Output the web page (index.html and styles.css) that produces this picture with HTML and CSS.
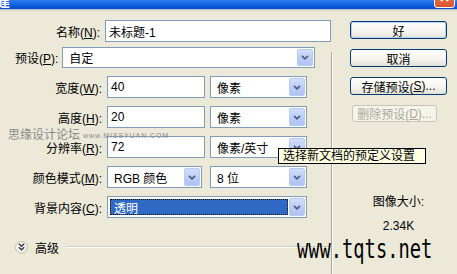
FILE: index.html
```html
<!DOCTYPE html>
<html lang="zh-CN">
<head>
<meta charset="utf-8">
<title>新建</title>
<link rel="stylesheet" href="styles.css">
</head>
<body>
<div class="window">
  <div class="titlebar">
    <span class="title">建</span>
    <span class="close"><svg width="11" height="11" viewBox="0 0 11 11"><path d="M2 2 L9 9 M9 2 L2 9" stroke="#fff" stroke-width="2"/></svg></span>
  </div>
  <div class="titleedge"></div>
  <div class="body">
    <div class="form">
      <div class="row">
        <span class="label">名称(<u>N</u>):</span>
        <div class="field field-name">未标题-1</div>
      </div>
      <div class="rows">
        <div class="row row-preset">
          <span class="label-preset">预设(<u>P</u>):</span>
          <div class="select select-preset"><span class="sel-text">自定</span><span class="drop"><svg width="8" height="5" viewBox="0 0 8 5"><path d="M1 0.8 L4 3.8 L7 0.8" stroke="#4A5E86" stroke-width="1.7" fill="none"/></svg></span></div>
        </div>
        <div class="row">
          <span class="label">宽度(<u>W</u>):</span>
          <div class="field field-num">40</div>
          <div class="select select-unit"><span class="sel-text">像素</span><span class="drop"><svg width="8" height="5" viewBox="0 0 8 5"><path d="M1 0.8 L4 3.8 L7 0.8" stroke="#4A5E86" stroke-width="1.7" fill="none"/></svg></span></div>
        </div>
        <div class="row">
          <span class="label">高度(<u>H</u>):</span>
          <div class="field field-num">20</div>
          <div class="select select-unit"><span class="sel-text">像素</span><span class="drop"><svg width="8" height="5" viewBox="0 0 8 5"><path d="M1 0.8 L4 3.8 L7 0.8" stroke="#4A5E86" stroke-width="1.7" fill="none"/></svg></span></div>
        </div>
        <div class="row">
          <span class="label">分辨率(<u>R</u>):</span>
          <div class="field field-num">72</div>
          <div class="select select-unit"><span class="sel-text">像素/英寸</span><span class="drop"><svg width="8" height="5" viewBox="0 0 8 5"><path d="M1 0.8 L4 3.8 L7 0.8" stroke="#4A5E86" stroke-width="1.7" fill="none"/></svg></span></div>
        </div>
        <div class="row">
          <span class="label">颜色模式(<u>M</u>):</span>
          <div class="select select-mode"><span class="sel-text">RGB 颜色</span><span class="drop"><svg width="8" height="5" viewBox="0 0 8 5"><path d="M1 0.8 L4 3.8 L7 0.8" stroke="#4A5E86" stroke-width="1.7" fill="none"/></svg></span></div>
          <div class="select select-unit"><span class="sel-text">8 位</span><span class="drop"><svg width="8" height="5" viewBox="0 0 8 5"><path d="M1 0.8 L4 3.8 L7 0.8" stroke="#4A5E86" stroke-width="1.7" fill="none"/></svg></span></div>
        </div>
        <div class="row">
          <span class="label">背景内容(<u>C</u>):</span>
          <div class="select select-bg"><span class="sel-text sel-active">透明</span><span class="drop"><svg width="8" height="5" viewBox="0 0 8 5"><path d="M1 0.8 L4 3.8 L7 0.8" stroke="#4A5E86" stroke-width="1.7" fill="none"/></svg></span></div>
        </div>
      </div>
      <div class="advanced">
        <span class="adv-btn"><svg width="7" height="8" viewBox="0 0 7 8"><path d="M0.8 0.8 L3.5 3.3 L6.2 0.8 M0.8 4.3 L3.5 6.8 L6.2 4.3" stroke="#2C3A4E" stroke-width="1.4" fill="none"/></svg></span>
        <span class="adv-text">高级</span>
        <span class="adv-line"></span>
      </div>
    </div>
    <div class="side">
      <div class="sep"></div>
      <div class="actions">
        <div class="btn btn-default">好</div>
        <div class="btn">取消</div>
        <div class="btn">存储预设(<u>S</u>)...</div>
        <div class="btn btn-disabled">删除预设(<u>D</u>)...</div>
        <div class="info">
          <div class="info-label">图像大小:</div>
          <div class="info-value">2.34K</div>
        </div>
      </div>
    </div>
  </div>
  <div class="tooltip">选择新文档的预定义设置</div>
  <div class="wm-cn">思缘设计论坛<span class="wm-small">www.MISSYUAN.COM</span></div>
  <div class="wm-url">www.tqts.net</div>
</div>
</body>
</html>
```

FILE: styles.css
```css
* { box-sizing: border-box; }

html, body {
  margin: 0;
  padding: 0;
  background: #ECE9D8;
}

.window {
  position: relative;
  width: 457px;
  height: 274px;
  overflow: hidden;
  background: #ECE9D8;
  font-family: "Liberation Sans", "Noto Sans CJK SC", sans-serif;
  font-size: 12px;
  color: #000;
}

u { text-decoration: underline; text-underline-offset: 1px; }

/* title bar */
.titlebar {
  height: 9px;
  display: flex;
  align-items: flex-end;
  justify-content: space-between;
  overflow: hidden;
  background: linear-gradient(#2E7CF0, #0B58DA 70%, #0A4BC8);
}
.title {
  color: #fff;
  font-weight: bold;
  font-size: 13px;
  line-height: 13px;
  margin-left: -3px;
  margin-bottom: 1px;
}
.close {
  width: 21px;
  height: 21px;
  margin-right: 2px;
  border: 1px solid #fff;
  border-radius: 3px;
  background: linear-gradient(#E98A68, #D9532C);
  display: flex;
  align-items: center;
  justify-content: center;
  margin-bottom: 1px;
}
.titleedge {
  height: 3px;
  background: linear-gradient(#9DB3DD, #DCD8C8 40%, #ECE9D8);
}

/* body */
.body {
  display: flex;
}
.form {
  width: 331px;
  flex-shrink: 0;
  padding-top: 8px;
}
.rows {
  margin-top: 5px;
  display: flex;
  flex-direction: column;
  gap: 8px;
}
.row {
  display: flex;
  align-items: center;
  height: 22px;
}
.label {
  width: 102px;
  margin-right: 5px;
  text-align: right;
  white-space: nowrap;
}
.row-preset { height: 21px; }
.label-preset {
  margin-left: 15px;
  margin-right: 4px;
  white-space: nowrap;
}

.field {
  height: 22px;
  border: 1px solid #7F9DB9;
  background: #fff;
  padding-left: 3px;
  display: flex;
  align-items: center;
  white-space: nowrap;
}
.field-name { width: 226px; flex-shrink: 0; }
.field-num { width: 98px; margin-right: 5px; }

.select {
  height: 22px;
  border: 1px solid #7F9DB9;
  background: #fff;
  display: flex;
  align-items: stretch;
  padding: 1px;
}
.sel-text {
  flex: 1;
  display: flex;
  align-items: center;
  padding-left: 5px;
  white-space: nowrap;
}
.sel-active {
  margin: 1px;
  padding-left: 4px;
  background: #316AC5;
  color: #fff;
  outline: 1px dotted #111;
  outline-offset: -1px;
}
.drop {
  width: 16px;
  border: 1px solid #B8CAF2;
  border-radius: 2px;
  background: linear-gradient(#D3DEFA, #BACBF6 60%, #AFC3F4);
  display: flex;
  align-items: center;
  justify-content: center;
}
.select-preset { width: 253px; height: 21px; }
.select-unit { width: 97px; }
.select-mode { width: 95px; margin-right: 8px; }
.select-bg { width: 200px; }

/* advanced */
.advanced {
  margin-top: 21px;
  height: 16px;
  display: flex;
  align-items: center;
}
.adv-btn {
  width: 13px;
  height: 13px;
  margin-left: 15px;
  border-radius: 50%;
  border: 1px solid #C3C0B0;
  background: radial-gradient(circle at 40% 35%, #fff, #E3E0D2);
  display: flex;
  align-items: center;
  justify-content: center;
}
.adv-text { margin-left: 7px; }
.adv-line {
  flex: 1;
  height: 2px;
  margin-left: 7px;
  border-top: 1px solid #D0CDBE;
  border-bottom: 1px solid #fff;
}

/* side */
.side {
  flex: 1;
  display: flex;
}
.sep {
  width: 2px;
  margin-top: 40px;
  height: 230px;
  border-left: 1px solid #ACA899;
  border-right: 1px solid #fff;
}
.actions {
  margin-left: 17px;
  padding-top: 9px;
  display: flex;
  flex-direction: column;
  gap: 10px;
  width: 97px;
}
.btn {
  height: 18px;
  width: 97px;
  border: 1px solid #003C74;
  border-radius: 3px;
  background: linear-gradient(#FFFFFF, #F4F3EE 60%, #E3E1D6);
  display: flex;
  align-items: center;
  justify-content: center;
  white-space: nowrap;
}
.btn-default {
  box-shadow: inset 0 0 0 1px #B9CEF2;
}
.btn-disabled {
  width: 85px;
  height: 17px;
  margin-left: 2px;
  border-color: #C9C7BA;
  background: #F5F4EA;
  color: #ACA899;
}
.info {
  margin-top: 63px;
  text-align: center;
  display: flex;
  flex-direction: column;
  gap: 10px;
}
.info-label, .info-value { line-height: 14px; }

/* overlays */
.tooltip {
  position: absolute;
  left: 278px;
  top: 148px;
  width: 148px;
  height: 16px;
  border: 1px solid #000;
  background: #FFFFE1;
  padding-left: 4px;
  line-height: 14px;
  white-space: nowrap;
  z-index: 3;
}
.wm-cn {
  position: absolute;
  left: 8px;
  top: 128px;
  color: #8A8A8A;
  font-size: 12px;
  line-height: 15px;
  white-space: nowrap;
  z-index: 2;
}
.wm-small {
  font-size: 7px;
  letter-spacing: 0.9px;
  margin-left: 3px;
  vertical-align: 1px;
}
.wm-url {
  position: absolute;
  left: 297px;
  top: 236px;
  font-family: "DejaVu Sans Mono", monospace;
  font-size: 26px;
  line-height: 26px;
  color: #000;
  transform: scaleX(0.72);
  transform-origin: left top;
  white-space: nowrap;
  z-index: 2;
}
```
